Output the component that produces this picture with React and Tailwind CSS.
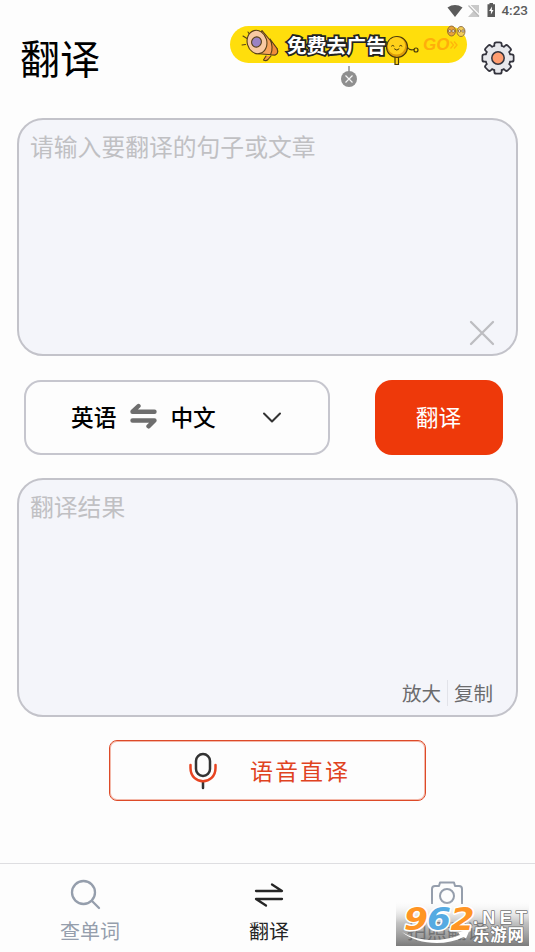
import React from 'react';

const StatusBar = () => (
  <div className="flex h-[22px] items-center justify-end pr-[7px]">
    <svg width="52" height="18" viewBox="0 0 52 18" className="mr-1">
      <path d="M2.500 5.400 Q10 0.600 17.500 5.400 L10 15 Z" fill="#5b5b5b" />
      <path d="M34 3 V15 H23 Z" fill="#c9c9c9" />
      <path d="M25 3 H34 V12 Z" fill="#c9c9c9" />
      <path d="M24.500 3 L35 13.500" stroke="#fdfdfd" strokeWidth="1.200" />
      <path d="M23.500 3.500 L34 14.500" stroke="#b9b9b9" strokeWidth="1.200" />
      <path d="M44.500 2.200 V1 H48 V2.200 H50 V15 H42.500 V2.200 Z" fill="#5b5b5b" />
      <path d="M47 4.500 L44.100 9 H45.900 V12.500 L48.500 8 H46.800 Z" fill="#fff" />
    </svg>
    <span className="font-[Roboto] text-[13.5px] font-medium leading-none text-[#5b5b5b]">4:23</span>
  </div>
);

const Megaphone = () => (
  <svg width="42" height="36" viewBox="0 0 42 36" className="absolute left-[9px] top-[1px]" fill="none" stroke="#574018" strokeWidth="1.100" strokeLinecap="round" strokeLinejoin="round">
    <path d="M9 5 L11 8 M4 9 L8 11.500 M3 18 L6.500 17.500" />
    <path d="M27 29 L24.500 33 Q27 34.500 29 32.500 L32 29" fill="#f49b3f" />
    <path d="M23 3.500 L38 21.500 Q40 26.500 36 28 L16 26.500 Z" fill="#f7a35c" />
    <path d="M31 12 L38 21.500 Q40 26.500 36 28 L31.500 27.800 Q35 21 31 12 Z" fill="#f08c3a" />
    <ellipse cx="18" cy="15" rx="9.800" ry="11.800" transform="rotate(-15 18 15)" fill="#f8c9a2" />
    <ellipse cx="17.500" cy="15" rx="4.800" ry="5.200" transform="rotate(24 17.500 15)" fill="#9a83c4" />
  </svg>
);

const Mascot = () => (
  <svg width="36" height="34" viewBox="0 0 36 34" className="absolute left-[155px] top-[7px]" fill="none" stroke="#4a3b0a" strokeWidth="1.200" strokeLinecap="round">
    <path d="M10 20 V31.500 H13.500 V20" fill="#ffcf13" />
    <path d="M22 14 Q25 18 29 16.500" />
    <circle cx="31" cy="17" r="2" />
    <circle cx="12" cy="14" r="10.500" fill="#dd9c0a" />
    <circle cx="11.500" cy="12.800" r="8.800" fill="#ffd11a" stroke="none" />
    <path d="M6.500 13 Q7.800 11.500 9 13 M14.500 13 Q15.800 11.500 17 13 M9.500 16 Q12 18.500 14 16" strokeWidth="1" />
  </svg>
);

const AdBanner = () => (
  <div className="relative h-[37px] w-[237px] rounded-full bg-[#ffde0c]">
    <Megaphone />
    <span className="absolute left-[57px] top-[5px] whitespace-nowrap text-[19.800px] font-bold leading-[28px] text-white [-webkit-text-stroke:3.500px_#222] [paint-order:stroke_fill]">
      免费去广告
    </span>
    <Mascot />
    <span className="absolute left-[193px] top-[9px] font-['Liberation_Sans'] text-[17px] font-bold italic leading-[20px] text-[#ffae0b]">
      GO
    </span>
    <svg width="8" height="8" viewBox="0 0 8 8" className="absolute left-[220px] top-[15px]" fill="none" stroke="#ffb50b" strokeWidth="1.300">
      <path d="M0.500 0.500 L3.500 4 L0.500 7.500 M4 0.500 L7 4 L4 7.500" />
    </svg>
    <svg width="22" height="16" viewBox="0 0 22 16" className="absolute left-[216px] top-[-3px]" fill="none" stroke="#7b5a35" strokeWidth="0.8">
      <ellipse cx="5.500" cy="8" rx="4" ry="5" fill="#e8a23a" />
      <ellipse cx="15" cy="8.500" rx="4" ry="5" fill="#f3ce58" />
      <circle cx="3.800" cy="8" r="1.300" fill="#fff" />
      <circle cx="7.200" cy="8" r="1.300" fill="#fff" />
      <circle cx="13.500" cy="8" r="1.200" fill="#fff" />
      <circle cx="17" cy="8" r="1.200" fill="#fff" />
    </svg>
    <svg width="18" height="22" viewBox="0 0 18 22" className="absolute left-[110px] top-[40px]">
      <path d="M9 0 V6" stroke="#8f8f8f" strokeWidth="1.500" />
      <circle cx="9" cy="13" r="8" fill="#8f8f8f" />
      <path d="M5.500 9.500 L12.500 16.500 M12.500 9.500 L5.500 16.500" stroke="#f5f5f5" strokeWidth="1.200" />
    </svg>
  </div>
);

const TEETH = [0, 45, 90, 135];

const GearIcon = () => (
  <svg width="34" height="34" viewBox="0 0 34 34">
    <g fill="#33333d">
      {TEETH.map((angle) => (
        <rect key={angle} x="12.5" y="0.5" width="9" height="33" rx="2.6" transform={`rotate(${angle} 17 17)`} />
      ))}
      <circle cx="17" cy="17" r="13.500" />
    </g>
    <g fill="#e7e8ec">
      {TEETH.map((angle) => (
        <rect key={angle} x="14.2" y="2.2" width="5.6" height="29.600" rx="1.400" transform={`rotate(${angle} 17 17)`} />
      ))}
      <circle cx="17" cy="17" r="11.800" />
    </g>
    <circle cx="17" cy="17" r="6.200" fill="#ff9d70" stroke="#33333d" strokeWidth="1.500" />
  </svg>
);

const SwapIcon = () => (
  <svg width="28" height="26" viewBox="0 0 28 26" fill="none" stroke="#6e6e6e" strokeWidth="4.400" strokeLinecap="round" strokeLinejoin="round">
    <path d="M25.500 8.700 H3.500 L9.500 3" />
    <path d="M3.500 17.500 H25.500 L19.500 23.300" />
  </svg>
);

const MicIcon = () => (
  <svg width="28" height="38" viewBox="0 0 28 38" fill="none" strokeWidth="2.500" strokeLinecap="round">
    <rect x="7" y="2" width="14" height="22" rx="7" stroke="#333" />
    <path d="M14 30 V36" stroke="#333" />
    <path d="M1.500 13 V16 C1.500 33.500 26.500 33.500 26.500 16 V13" stroke="#e84421" />
  </svg>
);

const Watermark = () => (
  <svg width="133" height="46" viewBox="0 0 133 46" className="absolute left-[396px] top-[36px]">
    <defs>
      <linearGradient id="shade" x1="0" y1="0" x2="0" y2="1">
        <stop offset="0" stopColor="#fff" stopOpacity="0" />
        <stop offset="0.500" stopColor="#999" stopOpacity="0.600" />
        <stop offset="1" stopColor="#666" stopOpacity="0.860" />
      </linearGradient>
    </defs>
    <rect width="133" height="46" fill="url(#shade)" />
    <path d="M6 32 C20 41 44 43 64 35 L62 32.500 L74 29 L70 38.500 L67.500 37 C48 47 20 44 6 32 Z" fill="#fff" />
    <g fontWeight="bold" paintOrder="stroke" strokeLinejoin="round">
      <g fontFamily="DejaVu Sans, sans-serif" fontSize="32" fontStyle="italic" stroke="#fff" strokeWidth="3">
        <text x="8" y="30" fill="#ff9524" textLength="24" lengthAdjust="spacingAndGlyphs">9</text>
        <text x="31" y="30" fill="#55aae2" textLength="24" lengthAdjust="spacingAndGlyphs">6</text>
        <text x="54.500" y="30" fill="#ff9524" textLength="24" lengthAdjust="spacingAndGlyphs">2</text>
      </g>
      <text x="77" y="24" fontFamily="Liberation Sans, sans-serif" fontSize="18" fill="#fff" stroke="#777" strokeWidth="1.500" textLength="54">
        .NET
      </text>
      <text x="77" y="41" fontSize="16.500" fill="#fff" stroke="#777" strokeWidth="1.500" fontFamily="Noto Sans CJK SC, sans-serif" textLength="51">
        乐游网
      </text>
    </g>
  </svg>
);

const BottomNav = () => (
  <nav className="relative flex h-[89px] border-t border-[#dedee1] text-[20px] leading-[28px] text-[#959eac]">
    <div className="flex w-[178px] flex-col items-center pt-[15px]">
      <svg width="32" height="32" viewBox="0 0 32 32" className="-ml-[7px]" fill="none" stroke="#959eac" strokeWidth="2.300" strokeLinecap="round">
        <circle cx="13.500" cy="13.500" r="11.500" />
        <path d="M22 22 L29 29" />
      </svg>
      <span className="mt-[6px] pl-[2px]">查单词</span>
    </div>
    <div className="flex w-[182px] flex-col items-center pt-[15px] text-[#252525]">
      <svg width="30" height="32" viewBox="0 0 30 32" fill="none" stroke="#252525" strokeWidth="2.300" strokeLinecap="round" strokeLinejoin="round">
        <path d="M2 12 H28 L18 5.500" />
        <path d="M28 20 H2 L12 26.500" />
      </svg>
      <span className="mt-[6px]">翻译</span>
    </div>
    <div className="flex w-[174px] flex-col items-center pt-[15px]">
      <svg width="34" height="32" viewBox="0 0 34 32" fill="none" stroke="#959eac" strokeWidth="2">
        <path d="M2 25 V10 Q2 7 5 7 H9 L10 3.500 H24 L25 7 H29 Q32 7 32 10 V25" strokeLinejoin="round" />
        <circle cx="17" cy="17" r="7" />
      </svg>
      <span className="mt-[6px] text-[#4c4f55]">拍照翻译</span>
    </div>
    <Watermark />
  </nav>
);

export default function App() {
  return (
    <div className="flex h-[952px] w-[535px] flex-col overflow-hidden bg-[#fdfdfd] font-['Noto_Sans_CJK_SC',sans-serif]">
      <StatusBar />

      {/* Header */}
      <header className="flex h-[96px] items-start pl-[20px]">
        <h1 className="mt-[6px] w-[210px] text-[40px] leading-[58px] text-black">翻译</h1>
        <div className="mt-[4px]">
          <AdBanner />
        </div>
        <div className="ml-[14px] mt-[19px]">
          <GearIcon />
        </div>
      </header>

      {/* Source text */}
      <section className="mx-[17px] flex h-[238px] flex-col justify-between rounded-[26px] border-2 border-[#c3c3ca] bg-[#f4f5fa] pl-[11px] pt-[9px]">
        <p className="text-[23.8px] leading-[34px] text-[#c0c0c3]">请输入要翻译的句子或文章</p>
        <svg width="26" height="26" viewBox="0 0 26 26" className="mb-[8px] mr-[21px] self-end" stroke="#bdbdc1" strokeWidth="2.300" strokeLinecap="round">
          <path d="M2 2 L24 24 M24 2 L2 24" />
        </svg>
      </section>

      {/* Language picker */}
      <div className="mt-[24px] flex h-[75px] pl-[24px]">
        <div className="flex w-[306px] items-center rounded-[17px] border-2 border-[#c6c6ce] pl-[45px] text-[22.700px] font-medium text-black">
          <span>英语</span>
          <span className="mx-[13px] -mt-[4px]">
            <SwapIcon />
          </span>
          <span>中文</span>
          <svg width="20" height="12" viewBox="0 0 20 12" className="ml-[46px]" fill="none" stroke="#333" strokeWidth="2" strokeLinecap="round" strokeLinejoin="round">
            <path d="M2 1.500 L10 9.500 L18 1.500" />
          </svg>
        </div>
        <button className="ml-[44.500px] w-[128px] rounded-[17px] bg-[#ee390a] text-[22.700px] text-white">翻译</button>
      </div>

      {/* Result */}
      <section className="mx-[17px] mt-[23px] flex h-[239px] flex-col justify-between rounded-[26px] border-2 border-[#c3c3ca] bg-[#f4f5fa] pl-[11px] pt-[9px]">
        <p className="text-[23.8px] leading-[34px] text-[#c0c0c3]">翻译结果</p>
        <div className="mb-[8px] mr-[23px] flex items-center self-end text-[19.500px] leading-[28px] text-[#6b6b6d]">
          <span>放大</span>
          <span className="mx-[6px] h-[26px] w-px bg-[#e2e3e9]" />
          <span>复制</span>
        </div>
      </section>

      <button className="ml-[109px] mt-[23px] flex h-[61px] w-[317px] items-center rounded-[8px] border border-[#dd4a28] pl-[79px] text-[#e0431f] shadow-[inset_0_0_0_1px_#f3b9aa]">
        <MicIcon />
        <span className="ml-[33px] text-[23px] tracking-[2px]">语音直译</span>
      </button>

      <div className="grow" />
      <BottomNav />
    </div>
  );
}
